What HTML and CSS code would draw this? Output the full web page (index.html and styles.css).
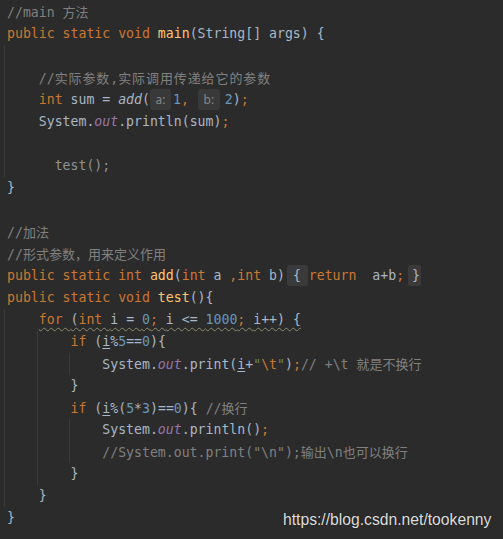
FILE: index.html
```html
<!DOCTYPE html>
<html>
<head>
<meta charset="utf-8">
<link rel="stylesheet" href="styles.css">
</head>
<body>
<div class="editor">
<div class="ln"><span class="cm">//main <span class="zh">方法</span></span></div>
<div class="ln"><span class="kw">public static void </span><span class="fn">main</span>(String[] args) {</div>
<div class="ln g1"> </div>
<div class="ln g1">    <span class="cm">//<span class="zh wide">实际参数</span>,<span class="zh wide">实际调用传递给它的参数</span></span></div>
<div class="ln g1">    <span class="kw">int </span>sum = <span class="it">add</span>(<span class="hint h1">a:</span><span class="num">1</span><span class="kw">,</span><span class="hint h2">b:</span><span class="num">2</span>)<span class="kw">;</span></div>
<div class="ln g1">    System.<span class="st">out</span>.println(sum)<span class="kw">;</span></div>
<div class="ln g1"> </div>
<div class="ln g1">      <span class="dim">test();</span></div>
<div class="ln">}</div>
<div class="ln"> </div>
<div class="ln"><span class="cm">//<span class="zh">加法</span></span></div>
<div class="ln"><span class="cm">//<span class="zh">形式参数，用来定义作用</span></span></div>
<div class="ln"><span class="kw">public static int </span><span class="fn">add</span>(<span class="kw">int </span>a <span class="kw">,int </span>b) <span class="fold fl">{</span> <span class="kw">return</span>  a+b<span class="kw">;</span> <span class="fold fr">}</span></div>
<div class="ln"><span class="kw">public static void </span><span class="fn">test</span>(){</div>
<div class="ln g1">    <span class="warn"><span class="kw">for </span>(<span class="kw">int </span>i = <span class="num">0</span><span class="kw">; </span>i &lt;= <span class="num">1000</span><span class="kw">; </span>i++) {</span></div>
<div class="ln g12">        <span class="kw">if </span>(<span class="ul">i</span>%<span class="num">5</span>==<span class="num">0</span>){</div>
<div class="ln g123">            System.<span class="st">out</span>.print(<span class="ul">i</span>+<span class="str">"<span class="kw">\t</span>"</span>)<span class="kw">;</span><span class="cm">// +\t <span class="zh">就是不换行</span></span></div>
<div class="ln g12">        }</div>
<div class="ln g12">        <span class="kw">if </span>(<span class="ul">i</span>%(<span class="num">5</span>*<span class="num">3</span>)==<span class="num">0</span>){ <span class="cm">//<span class="zh">换行</span></span></div>
<div class="ln g123">            System.<span class="st">out</span>.println()<span class="kw">;</span></div>
<div class="ln g123">            <span class="cm">//System.out.print("\n");<span class="zh">输出</span>\n<span class="zh">也可以换行</span></span></div>
<div class="ln g12">        }</div>
<div class="ln g1">    }</div>
<div class="ln">}</div>
</div>
<div class="wm">https://blog.csdn.net/tookenny</div>
</body>
</html>
```
FILE: styles.css
```css
html, body {
  margin: 0;
  padding: 0;
  background: #2b2b2b;
}
body {
  width: 503px;
  height: 539px;
  overflow: hidden;
  position: relative;
}
.editor {
  padding-top: 1px;
  font-family: "DejaVu Sans Mono", "Liberation Mono", monospace;
  font-size: 13.2px;
  color: #a9b7c6;
}
.ln {
  height: 22px;
  line-height: 22px;
  white-space: pre;
  padding-left: 7px;
}
.zh {
  font-family: "Noto Sans CJK SC", sans-serif;
  font-size: 13px;
}
.wide {
  letter-spacing: 0.9px;
}
.kw { color: #cc7832; }
.fn { color: #ffc66d; }
.cm { color: #808080; }
.num { color: #6897bb; }
.str { color: #6a8759; }
.st { color: #9876aa; font-style: italic; }
.it { font-style: italic; }
.dim { color: #8d9296; }
.ul {
  text-decoration: underline;
  text-underline-offset: 2px;
  text-decoration-thickness: 1px;
}
.warn {
  text-decoration: underline wavy #8c8a70;
  text-decoration-thickness: 1px;
  text-underline-offset: 3px;
}
.hint {
  display: inline-block;
  height: 21px;
  line-height: 21px;
  text-align: center;
  background: #393939;
  color: #858585;
  border-radius: 3px;
  font-family: "Noto Sans", sans-serif;
  font-size: 12px;
}
.h1 { width: 21px; margin: 0 2px 0 0; }
.h2 { width: 22px; margin: 0 5px 0 9px; }
.fold {
  background: #3a3a3a;
  padding: 3px 0;
  border-radius: 2px;
}
.fl { margin-left: -6px; padding-left: 6px; margin-right: -7px; padding-right: 7px; }
.fr { margin-left: -4px; padding-left: 4px; padding-right: 1px; }
.g1 {
  background: linear-gradient(#3b3b3b, #3b3b3b) 4px 0 / 1px 100% no-repeat;
}
.g12 {
  background:
    linear-gradient(#3b3b3b, #3b3b3b) 4px 0 / 1px 100% no-repeat,
    linear-gradient(#3b3b3b, #3b3b3b) 37px 0 / 1px 100% no-repeat;
}
.g123 {
  background:
    linear-gradient(#3b3b3b, #3b3b3b) 4px 0 / 1px 100% no-repeat,
    linear-gradient(#3b3b3b, #3b3b3b) 37px 0 / 1px 100% no-repeat,
    linear-gradient(#3b3b3b, #3b3b3b) 69px 0 / 1px 100% no-repeat;
}
.wm {
  position: absolute;
  left: 283px;
  top: 511px;
  font-family: "Liberation Sans", Arial, sans-serif;
  font-size: 15.7px;
  line-height: 18px;
  color: #dedede;
  text-shadow: 0 0 1px #111;
}
```
